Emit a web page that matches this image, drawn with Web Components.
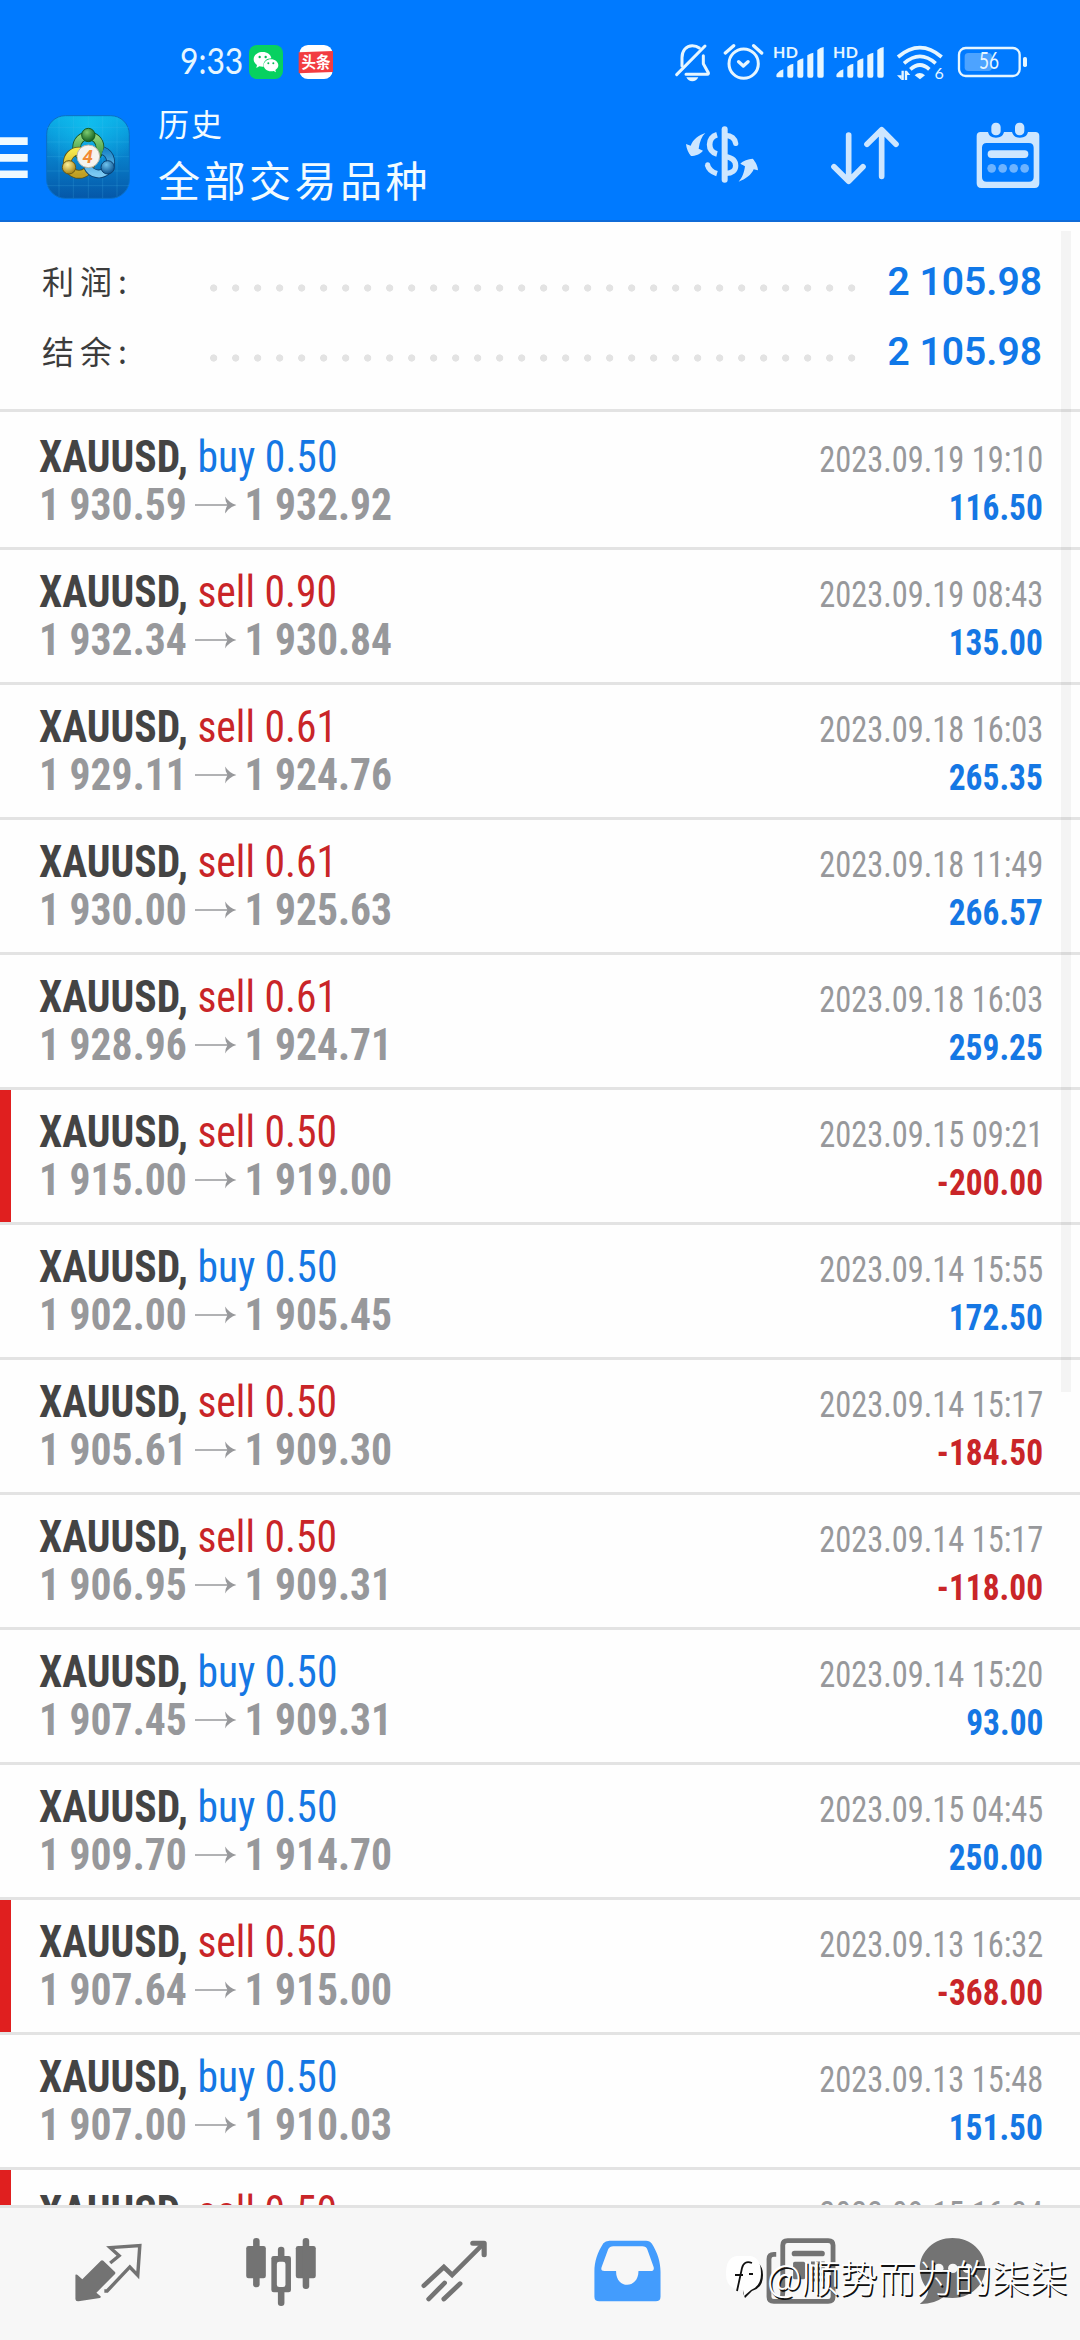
<!DOCTYPE html>
<html lang="zh-CN">
<head>
<meta charset="utf-8">
<title>历史</title>
<style>
  html, body { margin: 0; height: 2340px; overflow: hidden; background: #fefefe; }
  body { font-family: Roboto, "Noto Sans CJK SC", sans-serif; }
</style>
</head>
<body>
<history-app></history-app>
<script>
const define = (name, html, setup) => {
  const tpl = document.createElement('template');
  tpl.innerHTML = html;
  customElements.define(name, class extends HTMLElement {
    connectedCallback() {
      if (this.shadowRoot) return;
      const root = this.attachShadow({ mode: 'open' });
      root.append(tpl.content.cloneNode(true));
      if (setup) setup(this, root);
    }
  });
};

define('status-bar', `
<style>
  :host { display: flex; height: 82px; box-sizing: border-box; padding: 0 52px 0 180px; color: #e6f6ff; }
  svg { display: block; height: 82px; flex: none; }
  .time { font: 400 37px/82px Lato, sans-serif; width: 68px; height: 82px; margin-top: 19px; white-space: nowrap; }
  .time span { display: inline-block; transform: scaleX(.86); transform-origin: 0 50%; }
  .second { margin-left: 13px; }
  .grow { flex: 1; }
  text { fill: #e6f6ff; }
</style>
<div class="time"><span>9:33</span></div>
<svg width="36" viewBox="248 0 36 82">
  <g transform="translate(0 20) scale(.33333)">
    <rect x="747" y="75" width="102" height="102" rx="24" fill="#07d160"/>
    <path fill="#fff" d="M788 96c-15 0-27 9-27 22 0 7 4 13 10 17l-2 9 9-5c5 1 9 2 13 1-3-14 8-25 23-25-1-11-12-19-26-19z"/>
    <path fill="#fff" d="M813 118c-12 0-22 8-22 18s10 18 22 18c3 0 6 0 8-1l7 4-2-7c5-3 9-8 9-14 0-10-10-18-22-18z"/>
    <g fill="#07b958"><circle cx="779" cy="111" r="3.5"/><circle cx="797" cy="111" r="3.5"/><circle cx="805" cy="130" r="3"/><circle cx="820" cy="130" r="3"/></g>
  </g>
</svg>
<svg class="second" width="38" viewBox="297 0 38 82">
  <g transform="translate(0 20) scale(.33333)">
    <rect x="898" y="75" width="100" height="102" rx="26" fill="#fff"/>
    <path fill="#f23c41" d="M896 97l103-4v63l-103 4z"/>
  </g>
  <text x="301.500" y="68" textLength="29" lengthAdjust="spacingAndGlyphs" style="fill:#fff;font:bold 15.500px 'Noto Sans CJK SC',sans-serif">头条</text>
</svg>
<div class="grow"></div>
<svg width="96" viewBox="673 0 96 82">
  <g transform="translate(640 20) scale(.33333)" fill="none" stroke="#e6f6ff" stroke-width="9" stroke-linecap="round" stroke-linejoin="round">
    <path d="M126 138v-25c0-20 12-36 31-36 9 0 15 2 21 7M190 107v24l15 27c1 3 0 5-3 5h-64"/>
    <path d="M110 164l85-86" stroke-width="9"/>
    <path d="M139 172h36q-6 12-18 12t-18-12z" fill="#e6f6ff" stroke="none"/>
    <circle cx="311" cy="131" r="44"/><path d="M296 125l14 13 14-13M256 99l25-22M341 77l24 22" stroke-width="10"/>
  </g>
</svg>
<svg width="122" viewBox="769 0 122 82">
  <g transform="translate(640 20) scale(.33333)" fill="#e6f6ff">
    <g id="b"><path d="M410 162q10-12 20-14v24h-18q-3 0-3-4zM442 140q8-7 18-9v37q0 5-5 5h-8q-5 0-5-5zM472 123q8-6 18-8v53q0 5-5 5h-8q-5 0-5-5zM502 106q8-6 18-8v70q0 5-5 5h-8q-5 0-5-5zM532 90q8-7 19-9v87q0 5-5 5h-9q-5 0-5-5z"/></g>
    <use href="#b" x="180"/>
  </g>
  <text x="773" y="58" textLength="25" style="font:bold 16px Lato,sans-serif">HD</text>
  <text x="833" y="58" textLength="25" style="font:bold 16px Lato,sans-serif">HD</text>
</svg>
<svg width="60" viewBox="891 0 60 82">
  <g transform="translate(640 20) scale(.33333)" fill="none" stroke="#e6f6ff" stroke-width="11">
    <path d="M774 111q66-56 131 0M792 130q48-42 95 0M811 148q29-26 57 0"/>
    <path d="M824 166q15-14 31 0l-15 12z" fill="#e6f6ff" stroke="none"/>
    <path d="M788 152v28M798 180v-28" stroke-width="7"/><path d="M771 166h14v14zM801 153l10 12h-10z" fill="#e6f6ff" stroke="none"/>
  </g>
  <text x="934.500" y="79" style="font:16px Lato,sans-serif">6</text>
</svg>
<svg width="77" viewBox="951 0 77 82">
  <g transform="translate(640 20) scale(.33333)">
    <rect x="957" y="84" width="182" height="84" rx="20" fill="none" stroke="#e6f6ff" stroke-width="7"/>
    <rect x="974" y="99" width="82" height="54" rx="11" fill="#4da3ff"/>
    <rect x="1149" y="111" width="12" height="30" rx="5" fill="#e6f6ff"/>
  </g>
  <text x="979" y="69" textLength="20" lengthAdjust="spacingAndGlyphs" style="font:400 23px Lato,sans-serif">56</text>
</svg>
`);

define('app-logo', `
<style>:host{display:block;width:84px;height:84px} svg{display:block}</style>
<svg width="84" height="84" viewBox="138 283 252 252">
  <defs>
    <linearGradient id="bg" x1="0" y1="0" x2="0" y2="1"><stop offset="0" stop-color="#0aa9e4"/><stop offset=".5" stop-color="#087fca"/><stop offset="1" stop-color="#0557a8"/></linearGradient>
    <radialGradient id="gl" cx=".5" cy=".1" r=".6"><stop offset="0" stop-color="#12c4f2" stop-opacity=".8"/><stop offset="1" stop-color="#12c4f2" stop-opacity="0"/></radialGradient>
    <linearGradient id="g" x1="0" y1="0" x2="0" y2="1"><stop offset="0" stop-color="#8fd67c"/><stop offset="1" stop-color="#2d8b3a"/></linearGradient>
    <linearGradient id="y" x1="0" y1="0" x2="0" y2="1"><stop offset="0" stop-color="#f6e84c"/><stop offset="1" stop-color="#c09f24"/></linearGradient>
    <linearGradient id="u" x1="0" y1="0" x2="0" y2="1"><stop offset="0" stop-color="#1c86c8"/><stop offset="1" stop-color="#79c8f2"/></linearGradient>
    <radialGradient id="gb" cx=".4" cy=".3" r=".7"><stop offset="0" stop-color="#7ccb70"/><stop offset="1" stop-color="#14601f"/></radialGradient>
    <radialGradient id="yb" cx=".4" cy=".3" r=".7"><stop offset="0" stop-color="#fbf09a"/><stop offset="1" stop-color="#a88413"/></radialGradient>
    <radialGradient id="ub" cx=".4" cy=".3" r=".7"><stop offset="0" stop-color="#6fc3ee"/><stop offset="1" stop-color="#0a5290"/></radialGradient>
  </defs>
  <rect x="140" y="285" width="248" height="248" rx="56" fill="url(#bg)"/>
  <rect x="140" y="285" width="248" height="248" rx="56" fill="url(#gl)" stroke="#0b6fc4" stroke-width="3"/>
  <path d="M177 290v238M220 286v246M265 286v246M308 286v246M351 290v238M141 320h246M141 364h246M141 408h246M141 451h246M141 495h246" stroke="#54c3ee" stroke-opacity=".28" stroke-width="2"/>
  <g fill="none" stroke-width="21">
    <circle cx="265" cy="380" r="35" stroke="#17501f" stroke-width="26"/><circle cx="265" cy="380" r="35" stroke="url(#g)"/>
    <circle cx="237" cy="426" r="35" stroke="#5d5417" stroke-width="26"/><circle cx="237" cy="426" r="35" stroke="url(#y)"/>
    <path d="M309 390a36 36 0 1 1-46 48" stroke="#0b4172" stroke-width="26"/><path d="M309 390a36 36 0 1 1-46 48" stroke="url(#u)"/>
  </g>
  <circle cx="265" cy="343" r="20" fill="url(#gb)" stroke="#155a20" stroke-width="3"/>
  <circle cx="207" cy="440" r="20" fill="url(#yb)" stroke="#6b5a16" stroke-width="3"/>
  <circle cx="323" cy="440" r="20" fill="url(#ub)" stroke="#0b4172" stroke-width="3"/>
  <circle cx="265" cy="407" r="34" fill="#f6f3ee" stroke="#b9b4a8" stroke-width="3"/>
  <text x="263" y="427" text-anchor="middle" style="font:italic bold 56px Roboto,sans-serif;fill:#f28a34">4</text>
</svg>`);

define('app-toolbar', `
<style>
  :host { display: flex; height: 138px; padding-right: 38px; color: #f2fbff; }
  svg { display: block; height: 138px; flex: none; }
  app-logo { margin: 33px 0 0 18px; }
  .t { margin-left: 28px; flex: 1; font-family: "Noto Sans CJK SC", sans-serif; font-weight: 400; white-space: nowrap; }
  .a { font-size: 31px; line-height: 48px; margin-top: 17px; letter-spacing: 2px; }
  .b { font-size: 42px; line-height: 62px; margin-top: 1px; letter-spacing: 3.500px; }
  .s { margin-right: 69px; } .s + .s { margin-right: 73px; }
</style>
<svg width="28" viewBox="0 82 28 138"><path fill="#eefaff" d="M0 137.300h27.700v7.700H0zM0 154h27.700v7.700H0zM0 170.600h27.700v7.500H0z"/></svg>
<app-logo></app-logo>
<div class="t"><div class="a">历史</div><div class="b">全部交易品种</div></div>
<svg class="s" width="76" viewBox="684 82 76 138">
  <g transform="translate(640 20) scale(.33333)" fill="none" stroke="#cde6ff" stroke-width="16">
    <path d="M254 328v151" stroke-linecap="round" stroke-width="18"/>
    <path d="M256 346q27 1 31 24" stroke-linecap="round"/><path d="M256 410c20 3 31 13 31 27s-11 24-31 23"/>
    <path d="M231 344c-29 8-30 51 0 58" stroke-width="17"/>
    <path d="M202 434q5 20 29 27"/>
    <circle cx="203" cy="434" r="7.500" fill="#cde6ff" stroke="none"/>
    <path fill="#cde6ff" stroke="none" d="M196 339c-20 7-37 19-44 38l-14-5c1 12 7 27 15 36 13 0 28-6 36-16l-13-6c3-21 9-37 20-47zM296 485c20-7 39-21 45-37l13 3c0-12-8-27-16-35-13 1-29 6-37 15l14 8c-3 21-8 34-19 46z"/>
  </g>
</svg>
<svg class="s" width="72" viewBox="829 82 72 138">
  <g transform="translate(640 20) scale(.33333)" fill="none" stroke="#cde6ff" stroke-width="17" stroke-linecap="round" stroke-linejoin="round">
    <path d="M626 345v138M582 440l44 44 43-44M725 469V330M681 373l44-44 43 44"/>
  </g>
</svg>
<svg width="68" viewBox="974 82 68 138">
  <g transform="translate(640 20) scale(.33333)" fill="#cde6ff">
    <path fill-rule="evenodd" d="M1022 336h22c3 11 10 17 24 17s21-6 24-17h24c3 11 10 17 24 17s21-6 24-17h22q12 0 12 12v142q0 14-14 14h-160q-14 0-14-14V348q0-12 12-12zM1040 369q-14 0-14 14v88q0 14 14 14h127q14 0 14-14v-88q0-14-14-14z"/>
    <rect x="1054" y="308" width="28" height="38" rx="13"/><rect x="1125" y="308" width="28" height="38" rx="13"/>
    <rect x="1043" y="391" width="122" height="23" rx="11"/>
    <g fill="#6db3ff"><circle cx="1055" cy="445" r="13"/><circle cx="1088" cy="445" r="13"/><circle cx="1121" cy="445" r="13"/><circle cx="1154" cy="445" r="13"/></g>
  </g>
</svg>`);

define('summary-line', `
<style>
  :host { display: flex; height: 70px; align-items: center; padding: 0 38px 0 42px; }
  .l { width: 168px; font: 400 32px/70px "Noto Sans CJK SC", sans-serif; color: #3c3c3c; letter-spacing: 6px; height: 72px; }
  .d { width: 660px; height: 8px; margin-top: 14px; background: radial-gradient(circle at 3.700px 4px, #e3e3e3 3.300px, transparent 3.900px) 0 0 / 22px 8px repeat-x; }
  .v { flex: 1; text-align: right; font: 600 39px/70px Roboto, sans-serif; color: #1078e8; white-space: nowrap; padding-top: 2px; }
</style>
<div class="l"><slot name="label"></slot></div><div class="d"></div><div class="v"><slot></slot></div>`);

define('deal-row', `
<style>
  :host { display: block; height: 135px; box-sizing: border-box; border-bottom: 3px solid #e3e3e3; padding: 18px 37px 0 39px; font-stretch: 75%; }
  :host([first]) { height: 138px; padding-top: 21px; }
  :host([marked]) { box-shadow: inset 11px 0 #e01f1f; }
  .line { display: flex; justify-content: space-between; align-items: baseline; height: 48px; line-height: 48px; white-space: nowrap; font-size: 44px; }
  .line > span { transform-origin: 0 50%; display: block; }
  .line > span + span { transform-origin: 100% 50%; }
  .name { transform: scaleX(.945); color: #444; } .name b { font-weight: 700; }
  .side { font-weight: 400; }
  .px { transform: scaleX(.945); color: #97989b; font-weight: 700; }
  .px svg { display: inline-block; width: 44px; height: 18px; margin: 0 8px 0 9px; vertical-align: 6px; }
  .date { font-size: 36.500px; color: #97989b; transform: scaleX(.888); }
  .amt { font-size: 36.500px; font-weight: 700; transform: scaleX(.915); }
  .blue { color: #1577e4; } .red { color: #c92528; }
</style>
<div class="line"><span class="name"><b>XAUUSD,</b> <span class="side"></span></span><span class="date"></span></div>
<div class="line"><span class="px"><span class="o"></span><svg viewBox="0 0 42 18" preserveAspectRatio="none"><path d="M0 9h36" stroke="#97989b" stroke-width="1.500"/><path d="M30.500 .5q4 6.500 11.500 8.500-7.500 2-11.500 8.500 0-5 2.500-8.500-2.500-3.500-2.500-8.500z" fill="#97989b"/></svg><span class="c"></span></span><span class="amt"></span></div>`,
(el, root) => {
  const [side, open, close, date, amt] = el.dataset.deal.split('|');
  const $ = s => root.querySelector(s);
  $('.side').textContent = side; $('.side').classList.add(side.startsWith('buy') ? 'blue' : 'red');
  $('.o').textContent = open; $('.c').textContent = close; $('.date').textContent = date;
  $('.amt').textContent = amt; $('.amt').classList.add(amt.startsWith('-') ? 'red' : 'blue');
});

define('tab-bar', `
<style>
  :host { display: flex; height: 132px; padding-left: 22px; border-top: 3px solid #e3e3e3; background: #f7f7f7; }
  svg { display: block; height: 132px; flex: none; }
</style>
<svg width="173" viewBox="22 68 173 132"><g transform="scale(.34435 .33333)">
  <path fill="#737373" d="M219 404q4-2 7 2l13 12 54-56q3-3 7 0l34 34q2 3 0 6l-54 56 12 11q2 3-2 5l-62 10q-9 1-9-7z"/>
  <path fill="none" stroke="#737373" stroke-width="10" d="M320 369l26-22-26-24 86-6-6 89-23-25-66 72h-8"/></g></svg>
<svg width="173" viewBox="195 68 173 132"><g transform="scale(.34435 .33333)" fill="#737373">
  <rect x="715" y="318" width="57" height="97" rx="7"/><rect x="735" y="294" width="19" height="148" rx="9"/>
  <rect x="859" y="318" width="58" height="97" rx="7"/><rect x="879" y="294" width="19" height="153" rx="9"/>
  <rect x="788" y="348" width="57" height="109" rx="7"/><rect x="807" y="320" width="19" height="178" rx="9"/>
  <rect x="804" y="365" width="25" height="76" rx="7" fill="#f7f7f7"/></g></svg>
<svg width="173" viewBox="368 68 173 132"><g transform="scale(.34435 .33333)" fill="none" stroke="#737373" stroke-width="14" stroke-linecap="round">
  <path d="M1231 437l58-56 24 24 90-93M1245 477l46-48M1289 477l47-46"/><path d="M1373 310h33v34" stroke-width="15" stroke-linejoin="round"/></g></svg>
<svg width="173" viewBox="1 68 173 132"><g transform="scale(.34435 .33333)">
  <path fill="#439cfd" fill-rule="evenodd" d="M202 302h106q11 0 17 9c16 26 25 54 25 84v75q0 14-14 14H172q-14 0-14-14v-75c0-30 9-58 26-85q6-8 18-8zM213 319q-11 0-15 9l-19 53q-4 12 8 12h34c-1 55 65 55 65 0h35q12 0 9-12l-18-52q-4-10-15-10z"/></g></svg>
<svg width="173" viewBox="174 68 173 132"><g transform="scale(.34435 .33333)">
  <path fill="none" stroke="#737373" stroke-width="14" d="M686 343h-7q-14 0-14 14v113q0 14 14 14h158q14 0 14-14V316q0-14-14-14H719q-14 0-14 14v142q0 20-14 20"/>
  <rect x="731" y="332" width="96" height="17" rx="8" fill="#737373"/><rect x="735" y="365" width="35" height="53" rx="5" fill="#737373"/>
  <path d="M787 369h40M787 386h40M787 403h40M787 420h40" stroke="#737373" stroke-width="9" stroke-dasharray="11 4"/></g></svg>
<svg width="130" viewBox="347 68 130 132"><g transform="scale(.34435 .33333)">
  <path fill="#737373" d="M1198 294c53 0 95 40 95 90s-42 90-95 90q-15 0-26-3-28 22-69 21 22-18 25-42c-16-16-25-40-25-66 0-50 42-90 95-90z"/>
  <g fill="#f7f7f7"><circle cx="1158" cy="385" r="14"/><circle cx="1199" cy="385" r="14"/><circle cx="1241" cy="385" r="14"/></g></g></svg>`);

define('author-mark', `
<style>
  :host { display: flex; align-items: center; height: 48px; color: #fff; }
  svg { display: block; width: 42px; height: 48px; }
  span { font: 300 38px/48px "Noto Sans CJK SC", sans-serif; white-space: nowrap; text-shadow: 1.500px 1.500px .5px #111; }
</style>
<svg viewBox="0 0 42 48"><path fill="#111" d="M19 7q19 0 19 16 0 13-11 16l-7 7-2-5z"/><path fill="#fff" d="M12 4h13q11 1 11 18 0 12-10 16l-7 6-1-6Q1 38 1 22 1 5 12 4z"/><path d="M27 11q-8-3-10 5l-5 23M10 23h8M24 22h4" fill="none" stroke="#111" stroke-width="1.800"/></svg>
<span>@顺势而为的柒柒</span>`);

const deals = [
  'buy 0.50|1 930.59|1 932.92|2023.09.19 19:10|116.50',
  'sell 0.90|1 932.34|1 930.84|2023.09.19 08:43|135.00',
  'sell 0.61|1 929.11|1 924.76|2023.09.18 16:03|265.35',
  'sell 0.61|1 930.00|1 925.63|2023.09.18 11:49|266.57',
  'sell 0.61|1 928.96|1 924.71|2023.09.18 16:03|259.25',
  'sell 0.50|1 915.00|1 919.00|2023.09.15 09:21|-200.00',
  'buy 0.50|1 902.00|1 905.45|2023.09.14 15:55|172.50',
  'sell 0.50|1 905.61|1 909.30|2023.09.14 15:17|-184.50',
  'sell 0.50|1 906.95|1 909.31|2023.09.14 15:17|-118.00',
  'buy 0.50|1 907.45|1 909.31|2023.09.14 15:20|93.00',
  'buy 0.50|1 909.70|1 914.70|2023.09.15 04:45|250.00',
  'sell 0.50|1 907.64|1 915.00|2023.09.13 16:32|-368.00',
  'buy 0.50|1 907.00|1 910.03|2023.09.13 15:48|151.50',
  'sell 0.50|||2023.09.15 16:34|'
];

define('history-app', `
<style>
  :host { display: flex; flex-direction: column; position: relative; width: 1080px; height: 2340px; overflow: hidden; background: #fefefe; }
  header { background: #007aff; border-bottom: 2px solid #0f6bd8; flex: none; }
  .sum { flex: none; padding: 24px 0 23px; border-bottom: 3px solid #e3e3e3; }
  .list { flex: 1; min-height: 0; overflow: hidden; }
  tab-bar { flex: none; }
  .bar { position: absolute; left: 1061px; top: 231px; width: 10px; height: 1161px; background: rgba(0,0,0,.04); }
  author-mark { position: absolute; left: 725px; top: 2252px; }
</style>
<header><status-bar></status-bar><app-toolbar></app-toolbar></header>
<div class="sum">
  <summary-line><span slot="label">利润:</span>2 105.98</summary-line>
  <summary-line><span slot="label">结余:</span>2 105.98</summary-line>
</div>
<div class="list"></div>
<tab-bar></tab-bar>
<div class="bar"></div>
<author-mark></author-mark>`, (el, root) => {
  const list = root.querySelector('.list');
  deals.forEach((d, i) => {
    const row = document.createElement('deal-row');
    row.dataset.deal = d;
    if (i === 0) row.setAttribute('first', '');
    if (i === 5 || i === 11 || i === 13) row.setAttribute('marked', '');
    list.append(row);
  });
});
</script>
</body>
</html>
